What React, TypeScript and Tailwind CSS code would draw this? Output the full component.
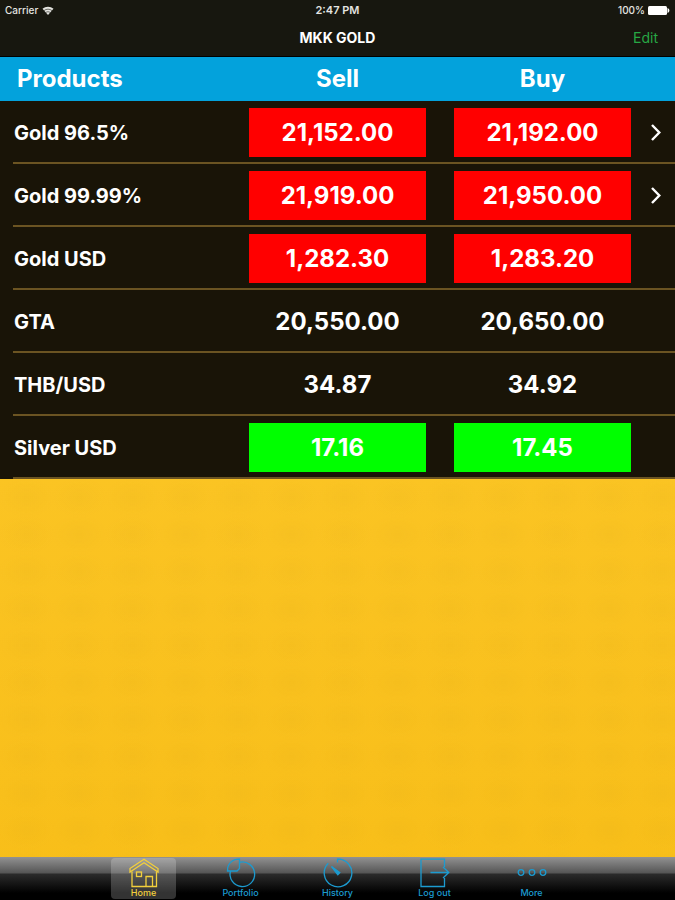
import { ReactNode, useState } from "react";
import clsx from "clsx";

type Trend = "up" | "down" | "none";

interface Product {
  name: string;
  sell: string;
  buy: string;
  trend: Trend;
  hasDetail?: boolean;
}

const products: Product[] = [
  { name: "Gold 96.5%", sell: "21,152.00", buy: "21,192.00", trend: "down", hasDetail: true },
  { name: "Gold 99.99%", sell: "21,919.00", buy: "21,950.00", trend: "down", hasDetail: true },
  { name: "Gold USD", sell: "1,282.30", buy: "1,283.20", trend: "down" },
  { name: "GTA", sell: "20,550.00", buy: "20,650.00", trend: "none" },
  { name: "THB/USD", sell: "34.87", buy: "34.92", trend: "none" },
  { name: "Silver USD", sell: "17.16", buy: "17.45", trend: "up" },
];

const trendColors: Record<Trend, string> = {
  up: "bg-[#00ff00]",
  down: "bg-[#ff0000]",
  none: "",
};

function TabIcon({ children }: { children: ReactNode }) {
  return (
    <svg
      viewBox="0 0 30 30"
      className="h-[30px] w-[30px]"
      fill="none"
      stroke="currentColor"
      strokeWidth="1.3"
      aria-hidden="true"
    >
      {children}
    </svg>
  );
}

const tabs = [
  {
    label: "Home",
    icon: (
      <TabIcon>
        <path d="M1 10.5 15 1.2 29 10.5V14L15 4.8 1 14Z" />
        <path d="M3 13.5V28.5H27.5V13.5" />
        <path d="M17 28.5V18.5H23.5V28.5" />
        <rect x="7.5" y="14" width="5" height="4.5" />
      </TabIcon>
    ),
  },
  {
    label: "Portfolio",
    icon: (
      <TabIcon>
        <path d="M13.5 4.3A12.3 12.3 0 1 1 4.5 13" />
        <path d="M13.5 1.2V10.5L11 13H1.5C1.2 6 6 1 13.5 1.2Z" />
      </TabIcon>
    ),
  },
  {
    label: "History",
    icon: (
      <TabIcon>
        <path d="M14.5 4.5V1.2A13.8 13.8 0 1 1 5.3 5.2" />
        <path d="M8.5 8.5 16.8 14.5 14.8 16.8Z" fill="currentColor" />
      </TabIcon>
    ),
  },
  {
    label: "Log out",
    icon: (
      <TabIcon>
        <path d="M24.5 9V1.2H1V28.5H24.5V20" />
        <path d="M10.5 14.5H28.5M23 9 28.8 14.5 23 20" />
      </TabIcon>
    ),
  },
  {
    label: "More",
    icon: (
      <TabIcon>
        <circle cx="4" cy="14.5" r="2.8" />
        <circle cx="15" cy="14.5" r="2.8" />
        <circle cx="26" cy="14.5" r="2.8" />
      </TabIcon>
    ),
  },
];

function StatusBar() {
  return (
    <div className="grid h-5 grid-cols-3 items-center px-[5px] text-[10px] leading-none font-medium text-[#e4e4e0]">
      <div className="flex items-center gap-1">
        <span>Carrier</span>
        <svg viewBox="0 0 12 9" className="h-[9px] w-3" fill="currentColor" aria-hidden="true">
          <path d="M6 9 0.5 2.8C3.5 0.1 8.5 0.1 11.5 2.8Z" />
          <path
            d="M2 4.6C4.3 2.7 7.7 2.7 10 4.6M3.8 6.5C5.1 5.5 6.9 5.5 8.2 6.5"
            fill="none"
            stroke="#17170f"
            strokeWidth="0.6"
          />
        </svg>
      </div>
      <span className="text-center text-[11px] font-semibold">2:47 PM</span>
      <div className="flex items-center justify-end gap-[3px]">
        <span>100%</span>
        <svg viewBox="0 0 22 9" className="h-[9px] w-[22px]" fill="#ffffff" aria-hidden="true">
          <rect width="19" height="9" rx="1.5" />
          <path d="M19.5 2C22 3 22 6 19.5 7Z" />
        </svg>
      </div>
    </div>
  );
}

function Price({ value, trend }: { value: string; trend: Trend }) {
  return (
    <td className="border-b-2 border-[#6b5422] px-[14px] pt-[7px] pb-[5px]">
      <div
        className={clsx(
          "flex h-[49px] items-center justify-center text-2xl font-bold",
          trendColors[trend]
        )}
      >
        {value}
      </div>
    </td>
  );
}

function PriceTable() {
  return (
    <table className="w-full table-fixed border-separate border-spacing-0 bg-[#191407] text-white">
      <colgroup>
        <col />
        <col className="w-[205px]" />
        <col className="w-[205px]" />
        <col className="w-[30px]" />
      </colgroup>
      <thead>
        <tr className="h-11 bg-[#03a2dc] text-2xl">
          <th scope="col" className="pl-[17px] text-left font-bold">
            Products
          </th>
          <th scope="col" className="font-bold">
            Sell
          </th>
          <th scope="col" className="font-bold">
            Buy
          </th>
          <td />
        </tr>
      </thead>
      <tbody>
        {products.map((product) => (
          <tr key={product.name}>
            <th scope="row" className="pl-[13px] text-left text-xl font-bold">
              <div className="flex h-[63px] items-center border-b-2 border-[#6b5422] pt-[2px] pl-px">
                {product.name}
              </div>
            </th>
            <Price value={product.sell} trend={product.trend} />
            <Price value={product.buy} trend={product.trend} />
            <td className="border-b-2 border-[#6b5422] pt-[2px]">
              {product.hasDetail && (
                <button
                  type="button"
                  aria-label={`${product.name} details`}
                  className="flex h-[49px] w-full items-center pl-[6px]"
                >
                  <svg
                    viewBox="0 0 10 17"
                    className="h-[17px] w-[10px]"
                    fill="none"
                    stroke="currentColor"
                    strokeWidth="2.4"
                    aria-hidden="true"
                  >
                    <path d="M1 1 8.3 8.5 1 16" />
                  </svg>
                </button>
              )}
            </td>
          </tr>
        ))}
      </tbody>
    </table>
  );
}

function App() {
  const [activeTab, setActiveTab] = useState("Home");

  return (
    <div className="flex min-h-screen flex-col bg-linear-to-b from-[#fecb2d] to-[#f8be18] font-['Inter',sans-serif]">
      <header className="border-b border-black bg-[#17170f]">
        <StatusBar />
        <div className="grid h-9 grid-cols-3 items-center px-[17px] text-sm">
          <h1 className="col-start-2 text-center font-bold text-white">MKK GOLD</h1>
          <button type="button" className="justify-self-end text-[#27a844]">
            Edit
          </button>
        </div>
      </header>

      <main className="flex flex-1 flex-col">
        <PriceTable />
        {/* woven cloth texture */}
        <div className="flex-1 bg-[radial-gradient(ellipse_at_center,rgba(190,140,20,0.06),transparent_75%)] bg-[length:53px_37px]" />
      </main>

      <nav className="flex h-[43px] justify-center bg-[linear-gradient(#929292,#555555_16px,#2b2b2b_17px,#000000_36px)]">
        {tabs.map((tab) => (
          <button
            key={tab.label}
            type="button"
            onClick={() => setActiveTab(tab.label)}
            className={clsx(
              "mx-4 mt-px mb-px flex w-[65px] flex-col items-center rounded text-[9px] leading-[10px] font-medium",
              activeTab === tab.label ? "bg-white/20 text-[#f2cf3c]" : "text-[#1c9bd0]"
            )}
          >
            {tab.icon}
            {tab.label}
          </button>
        ))}
      </nav>
    </div>
  );
}

export default App;
